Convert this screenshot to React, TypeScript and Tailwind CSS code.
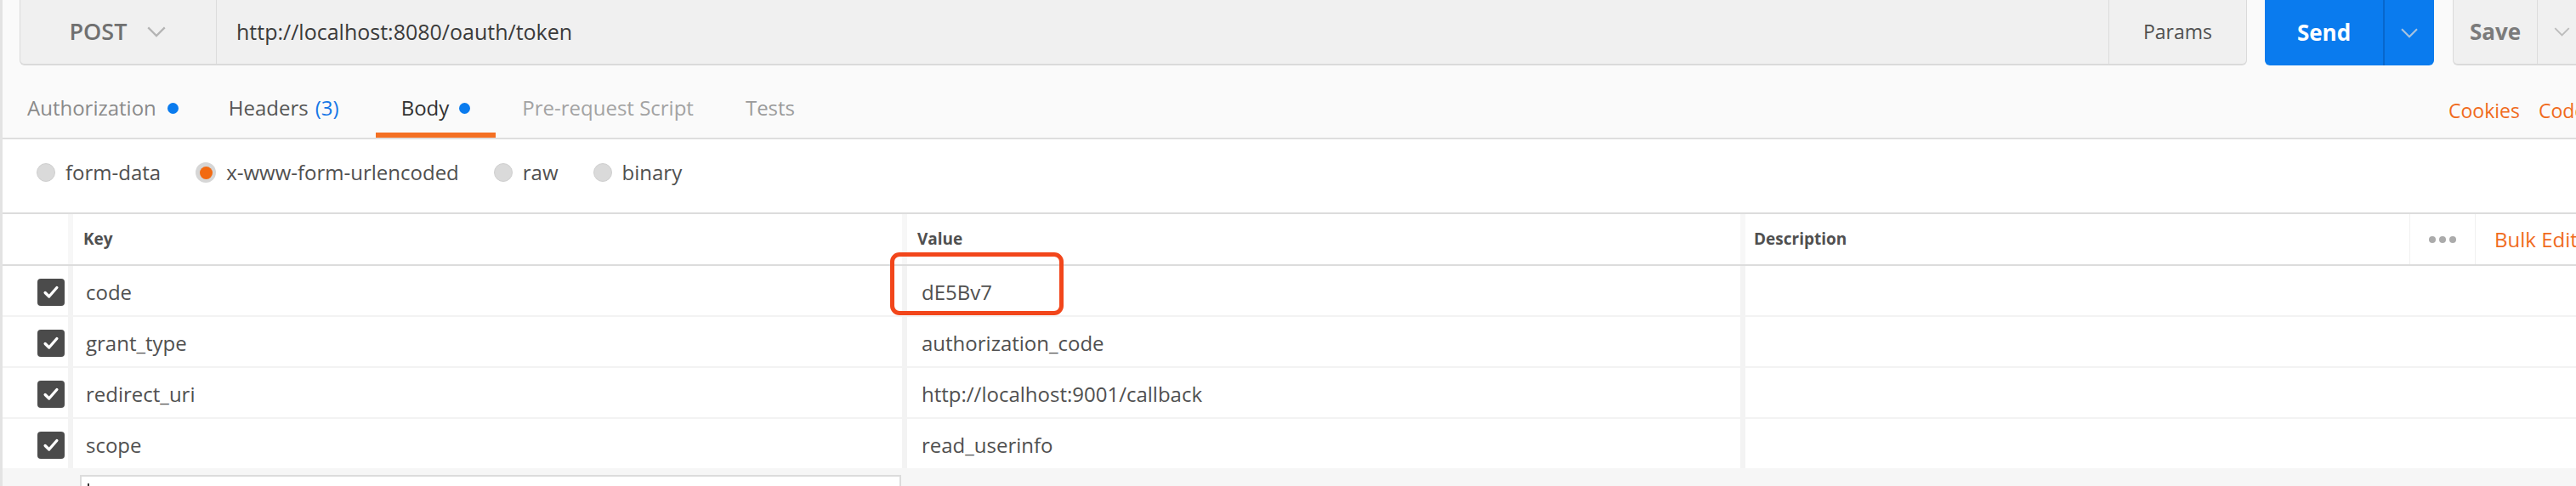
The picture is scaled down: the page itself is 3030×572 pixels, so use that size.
import React from 'react';

const Chevron = ({ className }: { className: string }) => (
  <svg viewBox="0 0 24 14" className={className} fill="none" stroke="currentColor" strokeWidth={2.4}>
    <polyline points="1.5,1.5 12,12 22.5,1.5" />
  </svg>
);

const CheckBox = () => (
  <div className="w-[32px] h-[32px] rounded-[4px] bg-[#4b4b4b] flex items-center justify-center">
    <svg viewBox="0 0 24 24" className="w-[22px] h-[22px]" fill="none" stroke="#ffffff" strokeWidth={3.6} strokeLinecap="round" strokeLinejoin="round">
      <polyline points="4.5,12.5 9.5,17.5 19.5,6" />
    </svg>
  </div>
);

const Radio = ({ label, checked }: { label: string; checked?: boolean }) => (
  <div className="flex items-center gap-[12px]">
    {checked ? (
      <div className="w-[24px] h-[24px] rounded-full bg-[#d6d6d6] flex items-center justify-center">
        <div className="w-[15px] h-[15px] rounded-full bg-[#f26a12]" />
      </div>
    ) : (
      <div className="w-[22px] h-[22px] rounded-full bg-[#dadada] border border-[#cfcfcf]" />
    )}
    <span className="text-[24px] text-[#505050]">{label}</span>
  </div>
);

const rows = [
  { key: 'code', value: 'dE5Bv7', marked: true },
  { key: 'grant_type', value: 'authorization_code' },
  { key: 'redirect_uri', value: 'http://localhost:9001/callback' },
  { key: 'scope', value: 'read_userinfo' },
];

const App: React.FC = () => {
  return (
    <div className="w-[3030px] h-[572px] overflow-hidden bg-white flex font-['Open_Sans',sans-serif]">
      <div className="w-[3px] shrink-0 bg-[#e3e3e3]" />

      <div className="flex-1 flex flex-col min-w-0">
        {/* URL bar */}
        <div className="h-[78px] shrink-0 bg-[#fafafa] flex items-start pl-[20px]">
          <div className="h-[77px] w-[2620px] shrink-0 flex bg-[#f0f0f0] border-x border-b-2 border-[#dadada] rounded-b-[6px]">
            <div className="w-[231px] shrink-0 flex items-center justify-center gap-[23px] border-r border-[#dcdcdc]">
              <span className="text-[27px] font-semibold text-[#707070]">POST</span>
              <Chevron className="w-[24px] h-[13px] text-[#b4b4b4]" />
            </div>
            <div className="flex-1 flex items-center pl-[23px] text-[25px] text-[#3a3a3a]">
              http://localhost:8080/oauth/token
            </div>
            <div className="w-[162px] shrink-0 flex items-center justify-center border-l border-[#dcdcdc] text-[23px] text-[#505050]">
              Params
            </div>
          </div>

          <div className="ml-[21px] h-[77px] w-[199px] shrink-0 flex bg-[#0a7bee] rounded-b-[6px]">
            <div className="flex-1 flex items-center justify-center text-[26px] font-bold text-white">Send</div>
            <div className="w-[60px] flex items-center justify-center border-l-2 border-[#0867cc]">
              <Chevron className="w-[22px] h-[12px] text-[#a9c3de]" />
            </div>
          </div>

          <div className="ml-[22px] h-[77px] w-[200px] shrink-0 flex bg-[#f0f0f0] border-l border-b-2 border-[#dadada] rounded-bl-[6px]">
            <div className="w-[98px] flex items-center justify-center text-[26px] font-bold text-[#7b7b7b]">Save</div>
            <div className="w-[57px] flex items-center justify-center border-l border-[#dcdcdc]">
              <Chevron className="w-[19px] h-[11px] text-[#bcbcbc]" />
            </div>
          </div>
        </div>

        {/* Tabs */}
        <div className="h-[86px] shrink-0 bg-[#fafafa] border-b-2 border-[#dedede] flex items-stretch">
          <div className="flex items-stretch text-[24px]">
            <div className="px-[29px] pt-[14px] flex items-center gap-[13px]">
              <span className="text-[#8a8a8a]">Authorization</span>
              <span className="w-[13px] h-[13px] rounded-full bg-[#0a7bee]" />
            </div>
            <div className="px-[30px] pt-[14px] flex items-center">
              <span className="text-[#555555]">Headers</span>
              <span className="ml-[8px] text-[#1677e6]">(3)</span>
            </div>
            <div className="ml-[13px] px-[30px] pt-[20px] flex items-center gap-[12px] border-b-[6px] border-[#f47023]">
              <span className="text-[#333333]">Body</span>
              <span className="w-[13px] h-[13px] rounded-full bg-[#0a7bee]" />
            </div>
            <div className="px-[31px] pt-[14px] flex items-center">
              <span className="text-[#a3a3a3]">Pre-request Script</span>
            </div>
            <div className="px-[30px] pt-[14px] flex items-center">
              <span className="text-[#9a9a9a]">Tests</span>
            </div>
          </div>
          <div className="flex-1" />
          <div className="w-[150px] shrink-0 flex items-center gap-[22px] pt-[20px] text-[23px] text-[#f06b1d] whitespace-nowrap overflow-hidden">
            <span>Cookies</span>
            <span>Code</span>
          </div>
        </div>

        {/* Body type */}
        <div className="h-[86px] shrink-0 flex items-center gap-[41px] pl-[40px] pb-[8px]">
          <Radio label="form-data" />
          <Radio label="x-www-form-urlencoded" checked />
          <Radio label="raw" />
          <Radio label="binary" />
        </div>

        {/* Key / value table */}
        <div className="border-y-2 border-[#dcdcdc] h-[63px] shrink-0 flex gap-[6px] bg-[#f7f7f7]">
          <div className="w-[77px] shrink-0 bg-white" />
          <div className="w-[975px] shrink-0 bg-white flex items-center pl-[12px] text-[19px] font-bold text-[#505050]">Key</div>
          <div className="w-[980px] shrink-0 bg-white flex items-center pl-[12px] text-[19px] font-bold text-[#505050]">Value</div>
          <div className="flex-1 min-w-0 bg-white flex items-stretch">
            <div className="w-[781px] shrink-0 flex items-center pl-[10px] text-[19px] font-bold text-[#505050]">Description</div>
            <div className="w-[78px] shrink-0 flex items-center justify-center gap-[4px] border-x border-[#f0f0f0]">
              <span className="w-[8px] h-[8px] rounded-full bg-[#ababab]" />
              <span className="w-[8px] h-[8px] rounded-full bg-[#ababab]" />
              <span className="w-[8px] h-[8px] rounded-full bg-[#ababab]" />
            </div>
            <div className="flex items-center pl-[22px] text-[24px] text-[#f06b1d] whitespace-nowrap">Bulk Edit</div>
          </div>
        </div>

        <div className="flex flex-col gap-[2px] bg-[#f3f3f3] shrink-0">
          {rows.map((r) => (
            <div key={r.key} className="h-[58px] flex gap-[6px]">
              <div className="w-[77px] shrink-0 bg-white flex items-center justify-end pr-[4px] pt-[4px]">
                <CheckBox />
              </div>
              <div className="w-[975px] shrink-0 bg-white flex items-center pl-[15px] pt-[4px] text-[24px] text-[#505050]">{r.key}</div>
              <div className="relative w-[980px] shrink-0 bg-white flex items-center pl-[17px] pt-[4px] text-[24px] text-[#505050]">
                {r.value}
                {r.marked && (
                  <div className="absolute left-[-20px] top-[-16px] w-[204px] h-[74px] border-[5px] border-[#f2461b] rounded-[11px]" />
                )}
              </div>
              <div className="flex-1 bg-white" />
            </div>
          ))}
        </div>

        <div className="flex-1 bg-[#f6f6f6] pt-[8px] pl-[91px]">
          <div className="w-[966px] h-[40px] bg-white border-2 border-[#dcdcdc] pl-[7px] pt-[8px]">
            <div className="w-[2px] h-[30px] bg-[#333333]" />
          </div>
        </div>
      </div>
    </div>
  );
};

export default App;
